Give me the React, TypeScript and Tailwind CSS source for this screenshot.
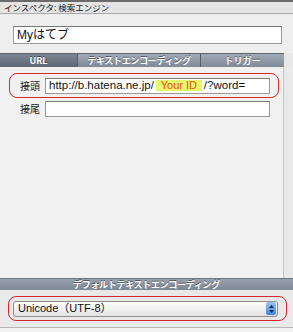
import React from "react";

const jp = "font-['Noto_Sans_CJK_JP','Noto_Sans',sans-serif]";
const latin = "font-['Liberation_Sans','Noto_Sans_CJK_JP',sans-serif]";

const Tab = ({ label, active, className }: { label: string; active?: boolean; className: string }) => (
  <div
    className={`flex h-full items-center justify-center border-r border-[#56606c] text-[9px] font-bold leading-none text-white [text-shadow:0_-1px_0_rgba(0,0,0,0.45)] ${jp} ${className} ${
      active
        ? "bg-gradient-to-b from-[#7b8592] to-[#5f6976]"
        : "bg-gradient-to-b from-[#a1aab5] to-[#808a97]"
    }`}
  >
    {label}
  </div>
);

const Field = ({ children }: { children?: React.ReactNode }) => (
  <div
    className={`flex h-[16px] w-[225px] items-center border border-[#9a9a9a] border-t-[#7a7a7a] bg-white pl-[3px] text-[11.5px] leading-none text-[#111] ${latin}`}
  >
    {children}
  </div>
);

export default function App() {
  return (
    <div className="flex h-[332px] w-[293px] flex-col overflow-hidden bg-[#e8e8e8]">
      {/* window title */}
      <div className="h-[2px] bg-[#6b6b6b]" />
      <div
        className={`flex h-[12px] items-center border-b border-[#a8a8a8] bg-[#e4e4e4] pl-[4px] text-[8.5px] leading-none text-[#1a1a1a] ${jp}`}
      >
        インスペクタ: 検索エンジン
      </div>

      {/* name */}
      <div className="h-[39px] bg-[#eeeeee] pl-[13px] pr-[11px] pt-[12px]">
        <div
          className={`flex h-[18px] items-center border border-[#9a9a9a] border-t-[#777] bg-white pl-[3px] text-[12px] leading-none text-[#111] ${latin}`}
        >
          Myはてブ
        </div>
      </div>

      {/* tabs */}
      <div className="flex h-[14px] w-[284px] border-t border-[#59636f]">
        <Tab label="URL" active className="w-[78px]" />
        <Tab label="テキストエンコーディング" className="w-[123px] tracking-[-0.3px]" />
        <Tab label="トリガー" className="flex-1 border-r-0" />
      </div>

      {/* url panel */}
      <div className="flex h-[211px]">
        <div className="flex w-[284px] flex-col border-r border-[#c4c4c4] bg-[#f1f1f1] pl-[9px] pt-[6px]">
          <div className="flex h-[25px] w-[270px] items-center rounded-[8px] border-[1.5px] border-[#d8252e] pl-[10px]">
            <span className={`w-[25px] text-[10px] leading-none text-[#222] ${jp}`}>接頭</span>
            <Field>
              <span>http://b.hatena.ne.jp/</span>
              <span className="ml-[2px] flex h-[11px] w-[46px] items-center justify-center bg-[#e6f76a] text-[11px] text-[#e5521a]">
                Your ID
              </span>
              <span className="ml-[2px]">/?word=</span>
            </Field>
          </div>
          <div className="mt-[3px] flex items-center pl-[11px]">
            <span className={`w-[25px] text-[10px] leading-none text-[#222] ${jp}`}>接尾</span>
            <Field />
          </div>
        </div>
        <div className="flex-1 bg-[#e9e9e9]" />
      </div>

      {/* default encoding */}
      <div
        className={`flex h-[12px] items-center justify-center border-t border-[#6a7480] bg-gradient-to-b from-[#98a1ac] to-[#7e8895] text-[9px] font-bold leading-none tracking-[-0.3px] text-white [text-shadow:0_-1px_0_rgba(0,0,0,0.45)] ${jp}`}
      >
        デフォルトテキストエンコーディング
      </div>
      <div className="h-[38px] border-b border-[#b5b5b5] bg-[#e9e9e9] pl-[8px] pt-[6px]">
        <div className="flex h-[25px] w-[279px] items-center rounded-[8px] border-[1.5px] border-[#d8252e] pl-[4px]">
          <div className="flex h-[16px] w-[265px] items-center justify-between rounded-[3px] border border-[#8e8e8e] bg-gradient-to-b from-white to-[#e2e2e2] pl-[4px] pr-[1px]">
            <span className={`text-[11px] leading-none text-[#111] ${latin}`}>Unicode（UTF-8）</span>
            <div className="flex h-[13px] w-[10px] flex-col items-center justify-center gap-[2px] rounded-[2px] bg-gradient-to-b from-[#9cc4f2] to-[#3f86dc]">
              <svg width="5" height="3" viewBox="0 0 5 3">
                <path d="M0 3 L2.5 0 L5 3 Z" fill="#1a2a40" />
              </svg>
              <svg width="5" height="3" viewBox="0 0 5 3">
                <path d="M0 0 L2.5 3 L5 0 Z" fill="#1a2a40" />
              </svg>
            </div>
          </div>
        </div>
      </div>
      <div className="flex-1 bg-[#f2f2f2]" />
    </div>
  );
}
